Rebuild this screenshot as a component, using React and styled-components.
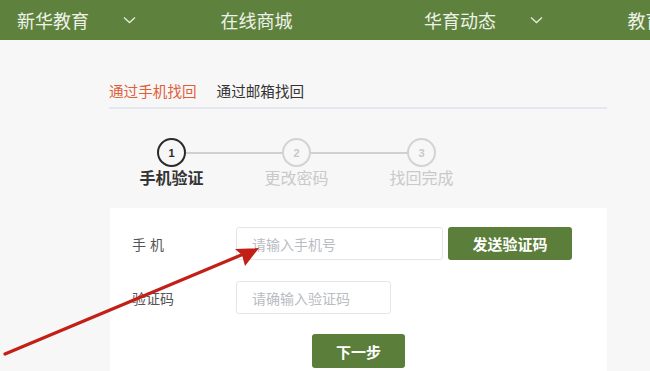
import React from "react";
import styled, { createGlobalStyle } from "styled-components";

const Global = createGlobalStyle`
  html, body { margin: 0; padding: 0; }
  body {
    background: #f7f7f7;
    font-family: "Microsoft YaHei", "Noto Sans CJK SC", "Liberation Sans", sans-serif;
    overflow: hidden;
  }
`;

const Page = styled.div`
  position: relative;
  width: 650px;
  height: 371px;
  overflow: hidden;
  background: #f7f7f7;
`;

const Header = styled.nav`
  height: 40px;
  background: #5e823e;
  display: flex;
  white-space: nowrap;
  overflow: hidden;
`;

const NavItem = styled.div`
  flex: 0 0 203.5px;
  box-sizing: border-box;
  padding-left: 17px;
  display: flex;
  align-items: center;
  color: #eef2e8;
  font-size: 18px;
`;

const NavText = styled.span`
  width: 106px;
  flex: 0 0 106px;
`;

const Chevron = () => (
  <svg width="13" height="8" viewBox="0 0 13 8">
    <path d="M1 1.5 L6.5 6.5 L12 1.5" fill="none" stroke="#e6ecdf" strokeWidth="1.3" />
  </svg>
);

const Content = styled.main`
  width: 498px;
  margin-left: 109px;
  padding-top: 41px;
`;

const Tabs = styled.div`
  display: flex;
  gap: 20px;
  padding-bottom: 6px;
  border-bottom: 2px solid #e4e7ee;
`;

const Tab = styled.span`
  font-size: 14.6px;
  line-height: 20px;
  color: ${(p) => (p.$active ? "#e0603a" : "#333")};
`;

const Steps = styled.div`
  display: flex;
  margin-top: 29px;
`;

const Step = styled.div`
  position: relative;
  flex: 0 0 125px;
  display: flex;
  flex-direction: column;
  align-items: center;

  &:not(:last-child)::after {
    content: "";
    position: absolute;
    top: 14px;
    left: calc(50% + 14px);
    width: 97px;
    height: 2px;
    background: #cfd0d2;
  }
`;

const Circle = styled.div`
  width: 25px;
  height: 25px;
  border-radius: 50%;
  border: 2px solid ${(p) => (p.$active ? "#2a2a2a" : "#d3d3d3")};
  color: ${(p) => (p.$active ? "#2a2a2a" : "#c8c8c8")};
  font-family: "Liberation Sans", sans-serif;
  font-size: 11px;
  font-weight: bold;
  display: flex;
  align-items: center;
  justify-content: center;
`;

const StepLabel = styled.div`
  margin-top: 1px;
  font-size: 16px;
  line-height: 18px;
  font-weight: ${(p) => (p.$active ? "bold" : "normal")};
  color: ${(p) => (p.$active ? "#333" : "#c9c9c9")};
`;

const Panel = styled.div`
  margin-top: 22px;
  margin-left: 1px;
  background: #fff;
  padding: 19px 0 20px 22px;
  height: 200px;
  box-sizing: border-box;
`;

const Row = styled.div`
  display: flex;
  align-items: center;
  margin-bottom: ${(p) => p.$mb || 0}px;
`;

const Label = styled.label`
  flex: 0 0 104px;
  font-size: 14px;
  color: #555;
  letter-spacing: ${(p) => p.$spread || 0}px;
`;

const Input = styled.input`
  box-sizing: border-box;
  width: ${(p) => p.$w}px;
  height: 33px;
  border: 1px solid #e6e6e6;
  border-radius: 3px;
  padding: 0 15px;
  font-size: 14px;
  font-family: inherit;
  outline: none;
  &::placeholder { color: #b9bcc2; }
`;

const GreenButton = styled.button`
  box-sizing: border-box;
  height: ${(p) => p.$h || 33}px;
  width: ${(p) => p.$w}px;
  margin-left: ${(p) => p.$ml || 0}px;
  background: #5b7e3a;
  color: #fff;
  border: none;
  border-radius: 3px;
  font-family: inherit;
  font-size: 15px;
  font-weight: bold;
  cursor: pointer;
`;

const Center = styled.div`
  display: flex;
  justify-content: center;
  margin-left: -22px;
`;

const ArrowLayer = styled.svg`
  position: absolute;
  left: 0;
  top: 0;
  pointer-events: none;
`;

export default function App() {
  return (
    <Page>
      <Global />
      <Header>
        <NavItem><NavText>新华教育</NavText><Chevron /></NavItem>
        <NavItem><NavText>在线商城</NavText></NavItem>
        <NavItem><NavText>华育动态</NavText><Chevron /></NavItem>
        <NavItem><NavText>教育资讯</NavText></NavItem>
      </Header>
      <Content>
        <Tabs>
          <Tab $active>通过手机找回</Tab>
          <Tab>通过邮箱找回</Tab>
        </Tabs>
        <Steps>
          <Step><Circle $active>1</Circle><StepLabel $active>手机验证</StepLabel></Step>
          <Step><Circle>2</Circle><StepLabel>更改密码</StepLabel></Step>
          <Step><Circle>3</Circle><StepLabel>找回完成</StepLabel></Step>
        </Steps>
        <Panel>
          <Row $mb={21}>
            <Label $spread={4}>手机</Label>
            <Input $w={207} placeholder="请输入手机号" />
            <GreenButton $w={124} $ml={5}>发送验证码</GreenButton>
          </Row>
          <Row $mb={20}>
            <Label>验证码</Label>
            <Input $w={155} placeholder="请确输入验证码" />
          </Row>
          <Center>
            <GreenButton $w={93} $h={34}>下一步</GreenButton>
          </Center>
        </Panel>
      </Content>
      <ArrowLayer width="650" height="371" viewBox="0 0 650 371">
        <line x1="5" y1="354" x2="246" y2="253" stroke="#c21f16" strokeWidth="3.2" strokeLinecap="round" />
        <polygon points="259,248 235,249 242,255 245,266" fill="#c21f16" />
      </ArrowLayer>
    </Page>
  );
}
